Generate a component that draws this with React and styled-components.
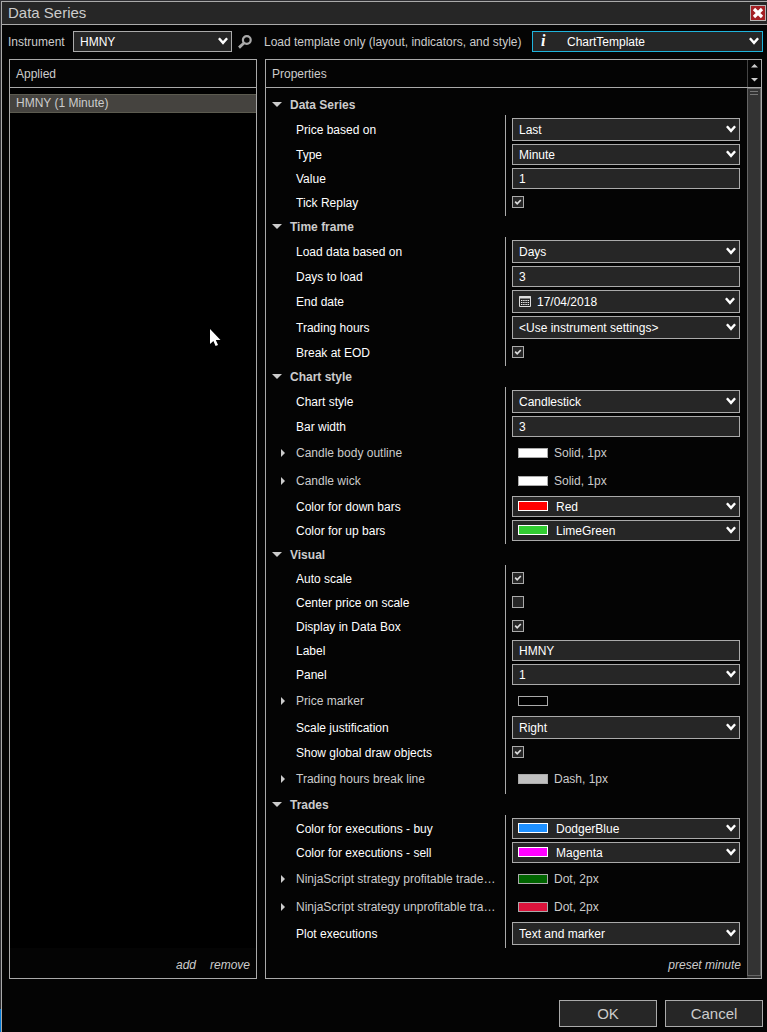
import React, {useState} from 'react'
import styled, {createGlobalStyle} from 'styled-components'

const GlobalStyle = createGlobalStyle`
  * {
    box-sizing: border-box;
  }

  body {
    margin: 0;
    background: #2a2a2e;
    color: #ccc;
    font-family: "Liberation Sans", Arial, sans-serif;
    font-size: 12px;
    line-height: 16px;
  }

  button, input, select {
    color: inherit;
    font: inherit;
    outline: none;
  }
`

const Desktop = styled.div`
  background: linear-gradient(#2f2f33 0, #2f2f33 1009px, #0078d7 1009px);
  min-height: 100vh;
  padding: 1px 0 0 1px;
  display: flex;
`

const Window = styled.div`
  background: #040404;
  border-left: 1px solid #aaa;
  border-top: 1px solid #aaa;
  display: flex;
  flex: 1;
  flex-direction: column;
  min-width: 0;
`

const TitleBar = styled.header`
  align-items: center;
  background: #262626;
  border-bottom: 1px solid #aaa;
  display: flex;
  height: 23px;
  justify-content: space-between;
  padding: 0 1px 0 6px;
`

const Title = styled.h1`
  font-size: 15px;
  font-weight: normal;
  line-height: 20px;
  margin: 0;
`

const CloseButton = styled.button`
  background: #a32024;
  border: 1px solid #b4b4b4;
  display: flex;
  height: 16px;
  padding: 0;
  width: 16px;
`

const Toolbar = styled.div`
  align-items: center;
  display: flex;
  padding: 6px 4px 7px 6px;
`

const InstrumentLabel = styled.label`
  width: 65px;
`

const TemplateLabel = styled.label`
  flex: 1;
`

const SearchButton = styled.button`
  background: none;
  border: none;
  display: flex;
  margin: 0 12px 0 6px;
  padding: 0;
`

const Panels = styled.main`
  display: grid;
  flex: 1;
  gap: 8px;
  grid-template-columns: 248px minmax(0, 1fr);
  padding: 0 5px 0 7px;
`

const Panel = styled.section`
  border: 1px solid #aaa;
  display: flex;
  flex-direction: column;
`

const PanelHeader = styled.div`
  border-bottom: 1px solid #aaa;
  display: flex;
  height: 28px;
  justify-content: space-between;
`

const PanelTitle = styled.h2`
  font-size: 12px;
  font-weight: normal;
  line-height: 28px;
  margin: 0;
  padding-left: 6px;
`

const PanelFooter = styled.div`
  align-items: center;
  display: flex;
  gap: 14px;
  height: 30px;
  justify-content: flex-end;
  padding: 4px 6px 0;
`

const TextLink = styled.a`
  color: #ccc;
  font-style: italic;
  text-decoration: none;
`

const SeriesList = styled.ul`
  background: #000;
  flex: 1;
  list-style: none;
  margin: 0;
  padding: 6px 0 0;
`

const SeriesItem = styled.li`
  background: #45433f;
  border: solid #5c5b50;
  border-width: 1px 0;
  line-height: 17px;
  padding-left: 6px;
`

const PanelBody = styled.div`
  display: flex;
  flex: 1;
`

const PropertyArea = styled.div`
  display: flex;
  flex: 1;
  flex-direction: column;
  justify-content: space-between;
  min-width: 0;
  padding-top: 6px;
`

const Spinner = styled.div`
  align-items: center;
  border-left: 1px solid #444;
  display: flex;
  flex-direction: column;
  justify-content: space-between;
  padding: 3px 0 4px;
  width: 14px;
`

const SpinButton = styled.button`
  background: none;
  border: none;
  display: flex;
  padding: 0;
`

const ScrollTrack = styled.div`
  background: #333;
  display: flex;
  padding-bottom: 2px;
  width: 14px;
`

const ScrollThumb = styled.div`
  align-items: center;
  background: #333;
  border: 1px solid #666;
  display: flex;
  flex: 1;
  flex-direction: column;
  gap: 2px;
  padding-top: 2px;
`

const Grip = styled.span`
  background: #777;
  height: 1px;
  width: 8px;
`

const GroupHeader = styled.button`
  align-items: center;
  background: none;
  border: none;
  color: #ccc;
  display: flex;
  font-weight: bold;
  gap: 8px;
  height: 21px;
  padding: 0 0 0 6px;
`

const GroupRows = styled.div`
  background: linear-gradient(#aaa, #aaa) 239px 0 / 1px 100% no-repeat;
  padding: 2px 0 1px;
`

const heights = {tall: 26, short: 24, line: 28}

const Row = styled.div`
  align-items: center;
  display: grid;
  grid-template-columns: 240px minmax(0, 1fr);
  height: ${props => heights[props.$size]}px;
  padding: ${props => (props.$size === 'line' ? '0' : '1px 0 2px')};
`

const RowLabel = styled.label`
  color: #fff;
  overflow: hidden;
  padding-left: 30px;
  white-space: nowrap;
`

const ExpandLabel = styled.button`
  align-items: center;
  background: none;
  border: none;
  color: #ccc;
  display: flex;
  gap: 11px;
  padding: 0 0 0 15px;
  white-space: nowrap;
`

const RowControl = styled.div`
  align-self: stretch;
  align-items: center;
  display: flex;
  padding: 0 7px 0 6px;
`

const FieldBox = styled.div`
  align-self: stretch;
  display: flex;
  flex: ${props => (props.$width ? 'none' : '1')};
  height: ${props => (props.$width ? '21px' : 'auto')};
  position: relative;
  width: ${props => props.$width || 'auto'};
`

const fieldIndent = {plain: '6px', icon: '24px', swatch: '43px', template: '34px'}

const Field = styled.input`
  appearance: none;
  background: #262626;
  border: 1px solid ${props => (props.$active ? '#1fb4dc' : '#aaa')};
  border-radius: 0;
  color: #fff;
  flex: 1;
  min-width: 0;
  padding: 0 18px 0 ${props => fieldIndent[props.$indent || 'plain']};
`

const Adornment = styled.span`
  align-items: center;
  bottom: 1px;
  color: #fff;
  display: flex;
  left: ${props => props.$left || 'auto'};
  pointer-events: none;
  position: absolute;
  right: ${props => props.$right || 'auto'};
  top: 0;
`

const InfoMark = styled.em`
  font-family: "Liberation Serif", serif;
  font-size: 16px;
  font-weight: bold;
  line-height: 20px;
`

const Swatch = styled.span`
  background: ${props => props.$color};
  border: 1px solid ${props => (props.$bright ? '#fff' : '#aaa')};
  height: 10px;
  width: 30px;
`

const LineStyle = styled.span`
  align-items: center;
  display: flex;
  gap: 6px;
  padding-left: 6px;
`

const CheckBox = styled.span`
  display: grid;
  height: 12px;
  margin-bottom: 1px;
  width: 12px;

  input, svg {
    grid-area: 1 / 1;
  }

  svg {
    pointer-events: none;
    visibility: hidden;
  }

  input:checked + svg {
    visibility: visible;
  }
`

const CheckInput = styled.input`
  appearance: none;
  background: #262626;
  border: 1px solid #aaa;
  height: 12px;
  margin: 0;
  width: 12px;
`

const DialogButtons = styled.footer`
  display: flex;
  gap: 8px;
  justify-content: flex-end;
  padding: 21px 4px 5px;
`

const DialogButton = styled.button`
  background: #262626;
  border: 1px solid #aaa;
  font-size: 15px;
  height: 27px;
  padding: 0;
  width: 98px;
`

const Pointer = styled.svg`
  left: 209px;
  pointer-events: none;
  position: absolute;
  top: 329px;
`

const Chevron = () =>
  <svg width="10" height="8" viewBox="0 0 10 8" aria-hidden="true">
    <path d="M.9 1.2L5 5.9L9.1 1.2" fill="none" stroke="#fff" strokeWidth="2.4" />
  </svg>

const CaretDown = () =>
  <svg width="10" height="5" viewBox="0 0 10 5" aria-hidden="true">
    <path d="M0 0h10L5 5z" fill="#ccc" />
  </svg>

const CaretRight = () =>
  <svg width="4" height="8" viewBox="0 0 4 8" aria-hidden="true">
    <path d="M0 0L4 4L0 8z" fill="#ccc" />
  </svg>

const SpinArrow = ({down}) =>
  <svg width="7" height="6" viewBox="0 0 7 6" aria-hidden="true">
    <path d={down ? 'M0 1h7L3.5 4.5z' : 'M0 4.5h7L3.5 1z'} fill="#ccc" />
  </svg>

const Calendar = () =>
  <svg width="12" height="11" viewBox="0 0 12 11" aria-hidden="true">
    <path d="M.5.5h11v10H.5z" fill="none" stroke="#ddd" />
    <path d="M0 1.5h12" stroke="#ddd" strokeWidth="2" />
    <path
      d="M2 4.5h8M2 6.5h8M2 8.5h8"
      stroke="#eee"
      strokeDasharray="1.4 .8"
    />
  </svg>

const Search = () =>
  <svg width="14" height="14" viewBox="0 0 14 14" aria-hidden="true">
    <circle cx="8.8" cy="5" r="3.9" fill="none" stroke="#aaa" strokeWidth="2.2" />
    <path d="M6 8L1 12.6" stroke="#aaa" strokeWidth="2.8" />
  </svg>

const Cross = () =>
  <svg width="14" height="14" viewBox="0 0 14 14" aria-hidden="true">
    <path d="M3 3L11 11M11 3L3 11" stroke="#fff" strokeWidth="3.2" />
  </svg>

const Check = () =>
  <svg width="12" height="12" viewBox="0 0 12 12" aria-hidden="true">
    <path d="M3.2 5.6L5.2 7.8L8.8 4" fill="none" stroke="#ddd" strokeWidth="1.7" />
  </svg>

const Select = ({id, value, width, active, indent, children}) =>
  <FieldBox $width={width}>
    <Field as="select" id={id} $active={active} $indent={indent}>
      <option>{value}</option>
    </Field>
    {children}
    <Adornment $right="4px">
      <Chevron />
    </Adornment>
  </FieldBox>

const Control = ({id, row}) => {
  switch (row.type) {
    case 'check':
      return (
        <CheckBox>
          <CheckInput type="checkbox" id={id} defaultChecked={row.value} />
          <Check />
        </CheckBox>
      )
    case 'text':
      return (
        <FieldBox>
          <Field id={id} type="text" defaultValue={row.value} />
        </FieldBox>
      )
    case 'date':
      return (
        <FieldBox>
          <Field id={id} type="text" defaultValue={row.value} $indent="icon" />
          <Adornment $left="7px">
            <Calendar />
          </Adornment>
          <Adornment $right="5px">
            <Chevron />
          </Adornment>
        </FieldBox>
      )
    case 'color':
      return (
        <Select id={id} value={row.value} indent="swatch">
          <Adornment $left="6px">
            <Swatch $color={row.color} $bright />
          </Adornment>
        </Select>
      )
    case 'line':
      return (
        <LineStyle>
          <Swatch $color={row.color} />
          {row.value}
        </LineStyle>
      )
    default:
      return <Select id={id} value={row.value} />
  }
}

const groups = [
  {
    title: 'Data Series',
    rows: [
      {label: 'Price based on', type: 'select', value: 'Last', size: 'tall'},
      {label: 'Type', type: 'select', value: 'Minute'},
      {label: 'Value', type: 'text', value: '1'},
      {label: 'Tick Replay', type: 'check', value: true}
    ]
  },
  {
    title: 'Time frame',
    rows: [
      {label: 'Load data based on', type: 'select', value: 'Days', size: 'tall'},
      {label: 'Days to load', type: 'text', value: '3'},
      {label: 'End date', type: 'date', value: '17/04/2018', size: 'tall'},
      {label: 'Trading hours', type: 'select', value: '<Use instrument settings>', size: 'tall'},
      {label: 'Break at EOD', type: 'check', value: true}
    ]
  },
  {
    title: 'Chart style',
    rows: [
      {label: 'Chart style', type: 'select', value: 'Candlestick', size: 'tall'},
      {label: 'Bar width', type: 'text', value: '3'},
      {label: 'Candle body outline', type: 'line', value: 'Solid, 1px', color: '#fff'},
      {label: 'Candle wick', type: 'line', value: 'Solid, 1px', color: '#fff'},
      {label: 'Color for down bars', type: 'color', value: 'Red', color: 'red'},
      {label: 'Color for up bars', type: 'color', value: 'LimeGreen', color: 'limegreen'}
    ]
  },
  {
    title: 'Visual',
    rows: [
      {label: 'Auto scale', type: 'check', value: true},
      {label: 'Center price on scale', type: 'check', value: false},
      {label: 'Display in Data Box', type: 'check', value: true},
      {label: 'Label', type: 'text', value: 'HMNY'},
      {label: 'Panel', type: 'select', value: '1'},
      {label: 'Price marker', type: 'line', value: '', color: '#000'},
      {label: 'Scale justification', type: 'select', value: 'Right', size: 'tall'},
      {label: 'Show global draw objects', type: 'check', value: true},
      {label: 'Trading hours break line', type: 'line', value: 'Dash, 1px', color: '#c0c0c0'}
    ]
  },
  {
    title: 'Trades',
    rows: [
      {label: 'Color for executions - buy', type: 'color', value: 'DodgerBlue', color: 'dodgerblue'},
      {label: 'Color for executions - sell', type: 'color', value: 'Magenta', color: 'magenta'},
      {label: 'NinjaScript strategy profitable trade…', type: 'line', value: 'Dot, 2px', color: 'darkgreen'},
      {label: 'NinjaScript strategy unprofitable tra…', type: 'line', value: 'Dot, 2px', color: 'crimson'},
      {label: 'Plot executions', type: 'select', value: 'Text and marker', size: 'tall'}
    ]
  }
]

const Group = ({title, rows}) => {
  const [open, setOpen] = useState(true)

  return (
    <div>
      <GroupHeader type="button" aria-expanded={open} onClick={() => setOpen(!open)}>
        <CaretDown />
        {title}
      </GroupHeader>
      {open &&
        <GroupRows>
          {rows.map(row => {
            const id = `${title}-${row.label}`.replace(/\W+/g, '-').toLowerCase()
            const line = row.type === 'line'
            return (
              <Row key={id} $size={line ? 'line' : row.size || 'short'}>
                {line
                  ? <ExpandLabel type="button">
                      <CaretRight />
                      {row.label}
                    </ExpandLabel>
                  : <RowLabel htmlFor={id}>{row.label}</RowLabel>}
                <RowControl>
                  <Control id={id} row={row} />
                </RowControl>
              </Row>
            )
          })}
        </GroupRows>}
    </div>
  )
}

const App = () =>
  <Desktop>
    <GlobalStyle />
    <Window>
      <TitleBar>
        <Title>Data Series</Title>
        <CloseButton type="button" aria-label="Close">
          <Cross />
        </CloseButton>
      </TitleBar>
      <Toolbar>
        <InstrumentLabel htmlFor="instrument">Instrument</InstrumentLabel>
        <Select id="instrument" value="HMNY" width="159px" />
        <SearchButton type="button" aria-label="Search">
          <Search />
        </SearchButton>
        <TemplateLabel htmlFor="template">
          Load template only (layout, indicators, and style)
        </TemplateLabel>
        <Select id="template" value="ChartTemplate" width="231px" indent="template" active>
          <Adornment $left="9px">
            <InfoMark>i</InfoMark>
          </Adornment>
        </Select>
      </Toolbar>
      <Panels>
        <Panel>
          <PanelHeader>
            <PanelTitle>Applied</PanelTitle>
          </PanelHeader>
          <SeriesList>
            <SeriesItem>HMNY (1 Minute)</SeriesItem>
          </SeriesList>
          <PanelFooter>
            <TextLink href="#add">add</TextLink>
            <TextLink href="#remove">remove</TextLink>
          </PanelFooter>
        </Panel>
        <Panel>
          <PanelHeader>
            <PanelTitle>Properties</PanelTitle>
            <Spinner>
              <SpinButton type="button" aria-label="Scroll up">
                <SpinArrow />
              </SpinButton>
              <SpinButton type="button" aria-label="Scroll down">
                <SpinArrow down />
              </SpinButton>
            </Spinner>
          </PanelHeader>
          <PanelBody>
            <PropertyArea>
              <div>
                {groups.map(group => <Group key={group.title} {...group} />)}
              </div>
              <PanelFooter>
                <TextLink href="#preset">preset minute</TextLink>
              </PanelFooter>
            </PropertyArea>
            <ScrollTrack>
              <ScrollThumb>
                <Grip />
                <Grip />
              </ScrollThumb>
            </ScrollTrack>
          </PanelBody>
        </Panel>
      </Panels>
      <DialogButtons>
        <DialogButton type="button">OK</DialogButton>
        <DialogButton type="button">Cancel</DialogButton>
      </DialogButtons>
    </Window>
    <Pointer width="12" height="18" viewBox="0 0 12 18" aria-hidden="true">
      <path d="M1 0V15L4.4 12L6.6 17L9 16L6.8 11H11.5z" fill="#fff" />
    </Pointer>
  </Desktop>

export default App
